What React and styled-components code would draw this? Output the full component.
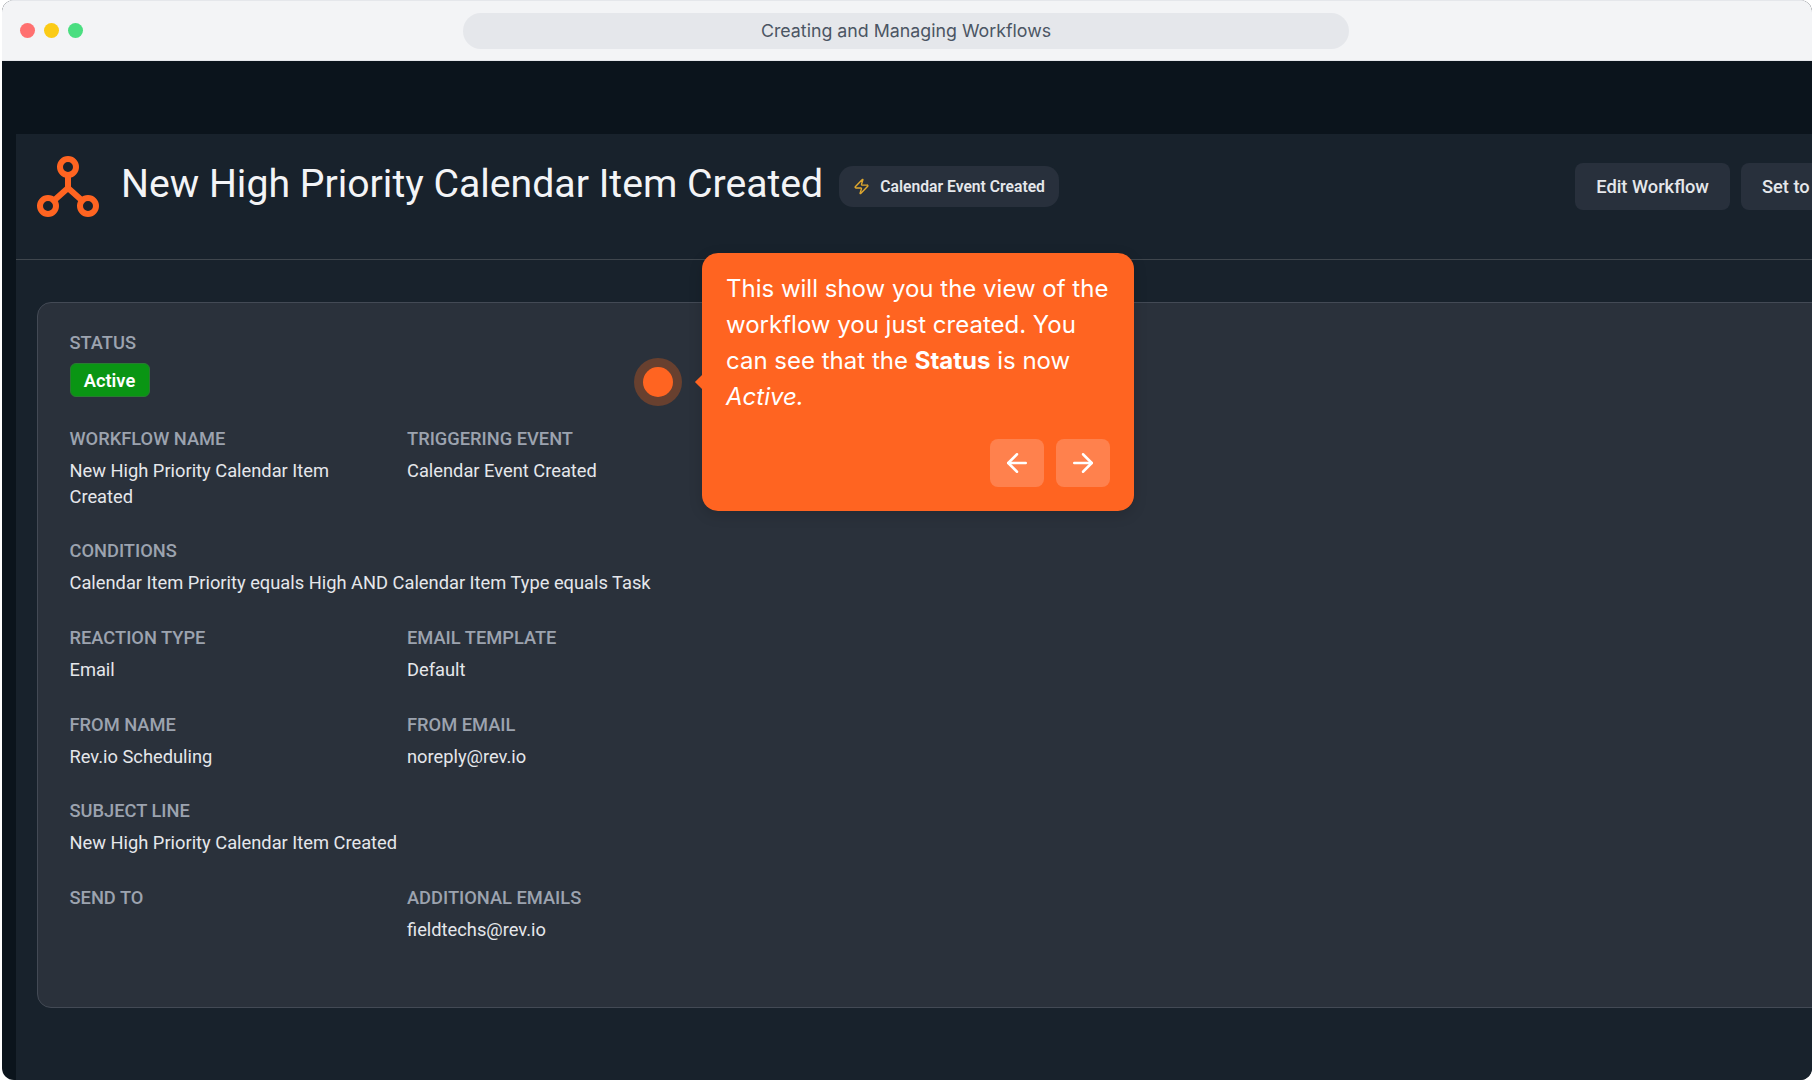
import styled, { createGlobalStyle } from "styled-components";
import { ArrowLeft, ArrowRight, Zap } from "lucide-react";

const GlobalStyle = createGlobalStyle`
  html, body {
    margin: 0;
    background: #ffffff;
  }
  * {
    box-sizing: border-box;
  }
`;

const BrowserWindow = styled.div`
  position: relative;
  width: 1810px;
  height: 1080px;
  margin-left: 2px;
  border-radius: 12px;
  overflow: hidden;
  display: flex;
  flex-direction: column;
  background: #0b141c;
  font-family: Roboto, sans-serif;
`;

const ChromeBar = styled.div`
  position: relative;
  height: 61px;
  flex: none;
  background: #f3f4f6;
  border-top: 1px solid #e5e7eb;
  border-bottom: 1px solid #e5e7eb;
  display: flex;
  align-items: center;
`;

const Dots = styled.div`
  display: flex;
  gap: 9px;
  padding-left: 18px;
  width: 461px;
  flex: none;
`;

const Dot = styled.span`
  width: 15px;
  height: 15px;
  border-radius: 50%;
  background: ${(p) => p.$color};
`;

const AddressPill = styled.div`
  width: 886px;
  height: 36px;
  border-radius: 18px;
  background: #e5e7eb;
  color: #4b5563;
  font: 400 17.8px Inter, sans-serif;
  display: flex;
  align-items: center;
  justify-content: center;
`;

const Page = styled.div`
  flex: 1;
  margin-top: 73px;
  margin-left: 14px;
  width: 1900px;
  background: #18222c;
`;

const Header = styled.div`
  height: 126px;
  border-bottom: 1px solid #3f464d;
  display: flex;
  align-items: flex-start;
  padding: 21px 0 0 20px;
`;

const LogoMark = styled.svg`
  width: 64px;
  height: 64px;
  flex: none;
`;

const Title = styled.h1`
  margin: 4px 0 0 21px;
  font-weight: 400;
  font-size: 39.2px;
  line-height: 50px;
  color: #f3f4f6;
  white-space: nowrap;
`;

const TriggerPill = styled.div`
  margin: 11px 0 0 16px;
  height: 41px;
  width: 220px;
  border-radius: 14px;
  background: #28303c;
  color: #e5e7eb;
  font-size: 15.7px;
  font-weight: 600;
  display: flex;
  align-items: center;
  gap: 10px;
  padding-left: 14px;
  white-space: nowrap;
`;

const Actions = styled.div`
  display: flex;
  gap: 11px;
  margin: 8px 0 0 516px;
`;

const ActionButton = styled.button`
  height: 47px;
  padding: 0 21px;
  border: 0;
  border-radius: 8px;
  background: #28303c;
  color: #e5e7eb;
  font: 500 18.3px Roboto, sans-serif;
  white-space: nowrap;
`;

const Content = styled.div`
  padding: 42px 0 0 21px;
`;

const Card = styled.div`
  height: 706px;
  border: 1px solid #434a55;
  border-radius: 14px;
  background: #2a313b;
  padding: 28px 31.5px;
  display: flex;
  flex-direction: column;
  gap: 29.2px;
`;

const Row = styled.div`
  display: grid;
  grid-template-columns: 337.5px 337px;
`;

const Field = styled.div`
  min-width: 0;
  padding-right: 24px;
`;

const Label = styled.div`
  font-size: 18.3px;
  font-weight: 500;
  line-height: 24px;
  color: #9ca3af;
  margin-bottom: ${(p) => p.$gap || 7}px;
  white-space: nowrap;
`;

const Value = styled.div`
  font-size: 18.3px;
  line-height: ${(p) => (p.$wrap ? 26 : 26.5)}px;
  color: #e5e7eb;
  white-space: ${(p) => (p.$wrap ? "normal" : "nowrap")};
`;

const StatusBadge = styled.span`
  display: flex;
  align-items: center;
  justify-content: center;
  width: 80px;
  height: 34px;
  margin-bottom: 1px;
  border: 1px solid #2a7a33;
  border-radius: 6px;
  background: #0a9514;
  color: #ffffff;
  font-size: 18.3px;
  font-weight: 600;
`;

const Beacon = styled.div`
  position: absolute;
  left: 632px;
  top: 358px;
  width: 48px;
  height: 48px;
  border-radius: 50%;
  background: #68402f;
  display: flex;
  align-items: center;
  justify-content: center;

  &::after {
    content: "";
    width: 30px;
    height: 30px;
    border-radius: 50%;
    background: #ff6421;
  }
`;

const Tooltip = styled.div`
  position: absolute;
  left: 700px;
  top: 253px;
  width: 432px;
  height: 258px;
  border-radius: 16px;
  background: #ff6421;
  color: #ffffff;
  padding: 18px 24px 0;
  font-family: Inter, sans-serif;
  font-size: 24px;
  line-height: 36px;
  box-shadow: 0 4px 14px rgba(0, 0, 0, 0.15);

  &::before {
    content: "";
    position: absolute;
    left: -5px;
    top: 124px;
    width: 10px;
    height: 10px;
    background: #ff6421;
    transform: rotate(45deg);
  }
`;

const TipText = styled.div`
  position: relative;
`;

const TipNav = styled.div`
  display: flex;
  justify-content: flex-end;
  gap: 12px;
  margin-top: 24px;
`;

const TipButton = styled.button`
  width: 54px;
  height: 48px;
  padding: 0;
  border: 0;
  border-radius: 8px;
  background: #ff814d;
  color: #ffffff;
  display: flex;
  align-items: center;
  justify-content: center;
`;

export default function App() {
  return (
    <>
      <GlobalStyle />
      <BrowserWindow>
        <ChromeBar>
          <Dots>
            <Dot $color="#ff7070" />
            <Dot $color="#fbcb16" />
            <Dot $color="#4ade80" />
          </Dots>
          <AddressPill>Creating and Managing Workflows</AddressPill>
        </ChromeBar>
        <Page>
          <Header>
            <LogoMark viewBox="0 0 64 64" fill="none" stroke="#ff6421" strokeWidth="6" strokeLinecap="round">
              <circle cx="32" cy="12" r="8" />
              <circle cx="12" cy="51" r="8" />
              <circle cx="52" cy="51" r="8" />
              <path d="M32 20V33M32 33L18 45.5M32 33L46 45.5" />
            </LogoMark>
            <Title>New High Priority Calendar Item Created</Title>
            <TriggerPill>
              <Zap size={17} color="#e0a82e" strokeWidth={2} />
              Calendar Event Created
            </TriggerPill>
            <Actions>
              <ActionButton>Edit Workflow</ActionButton>
              <ActionButton>Set to Inactive</ActionButton>
            </Actions>
          </Header>
          <Content>
            <Card>
              <Row>
                <Field>
                  <Label $gap={8}>STATUS</Label>
                  <StatusBadge>Active</StatusBadge>
                </Field>
              </Row>
              <Row>
                <Field>
                  <Label>WORKFLOW NAME</Label>
                  <Value $wrap>New High Priority Calendar Item Created</Value>
                </Field>
                <Field>
                  <Label>TRIGGERING EVENT</Label>
                  <Value>Calendar Event Created</Value>
                </Field>
              </Row>
              <Row>
                <Field>
                  <Label>CONDITIONS</Label>
                  <Value>Calendar Item Priority equals High AND Calendar Item Type equals Task</Value>
                </Field>
              </Row>
              <Row>
                <Field>
                  <Label>REACTION TYPE</Label>
                  <Value>Email</Value>
                </Field>
                <Field>
                  <Label>EMAIL TEMPLATE</Label>
                  <Value>Default</Value>
                </Field>
              </Row>
              <Row>
                <Field>
                  <Label>FROM NAME</Label>
                  <Value>Rev.io Scheduling</Value>
                </Field>
                <Field>
                  <Label>FROM EMAIL</Label>
                  <Value>noreply@rev.io</Value>
                </Field>
              </Row>
              <Row>
                <Field>
                  <Label>SUBJECT LINE</Label>
                  <Value>New High Priority Calendar Item Created</Value>
                </Field>
              </Row>
              <Row>
                <Field>
                  <Label>SEND TO</Label>
                </Field>
                <Field>
                  <Label>ADDITIONAL EMAILS</Label>
                  <Value>fieldtechs@rev.io</Value>
                </Field>
              </Row>
            </Card>
          </Content>
        </Page>
        <Beacon />
        <Tooltip>
          <TipText>
            This will show you the view of the workflow you just created. You can see that the <b>Status</b> is now <i>Active.</i>
          </TipText>
          <TipNav>
            <TipButton>
              <ArrowLeft size={30} strokeWidth={2} />
            </TipButton>
            <TipButton>
              <ArrowRight size={30} strokeWidth={2} />
            </TipButton>
          </TipNav>
        </Tooltip>
      </BrowserWindow>
    </>
  );
}
